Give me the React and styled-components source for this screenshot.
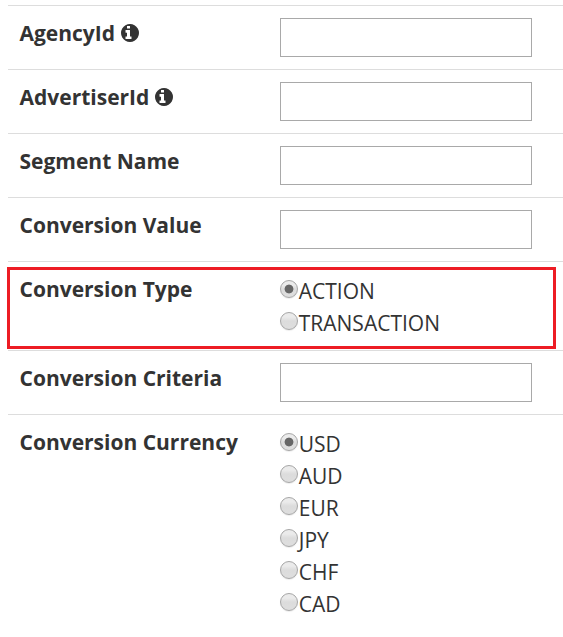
import React, { useState } from 'react';
import styled, { createGlobalStyle } from 'styled-components';

const GlobalStyle = createGlobalStyle`
  body {
    margin: 0;
    background: #fff;
    color: #333;
    font-family: 'Open Sans', 'Noto Sans', sans-serif;
    overflow: hidden;
  }
`;

const StyledForm = styled.form`
  margin: 5px 0 0 8px;
`;

const StyledRow = styled.div`
  position: relative;
  display: flex;
  align-items: flex-start;
  padding: 12px 12px 12px 11.5px;
  border-top: 1px solid #ddd;
`;

const StyledLabel = styled.div`
  display: flex;
  align-items: center;
  gap: 6px;
  width: 260.5px;
  height: 30px;
  font-size: 21px;
  font-weight: 700;
  white-space: nowrap;
`;

const StyledInfo = styled.svg`
  width: 18px;
  height: 18px;
  fill: currentColor;
`;

const StyledInput = styled.input`
  box-sizing: border-box;
  width: 252px;
  height: 39px;
  padding: 0 8px;
  border: 1px solid #a9a9a9;
  border-radius: 0;
  background: #fff;
  font: inherit;
  font-size: 21px;
  outline: none;
`;

const StyledOption = styled.label`
  display: flex;
  align-items: flex-start;
  height: 32px;
  font-size: 21px;
  line-height: 35px;
  white-space: nowrap;
`;

const StyledRadio = styled.input.attrs({ type: 'radio' })`
  appearance: none;
  box-sizing: border-box;
  width: 18px;
  height: 18px;
  margin: 6px 0.75px 0 0;
  border: 1px solid #a6a6a6;
  border-radius: 50%;
  background: linear-gradient(#ebebeb 25%, #dcdcdc 50%, #dedede);
  box-shadow: 0 1px 1px rgba(0, 0, 0, 0.08);

  &:checked {
    background: radial-gradient(circle, #666 4px, transparent 4.8px),
      linear-gradient(#ebebeb 25%, #dcdcdc 50%, #dedede);
  }
`;

const StyledHighlight = styled.div`
  position: absolute;
  top: 5px;
  left: -1px;
  box-sizing: border-box;
  width: 549px;
  height: 82px;
  border: 3px solid #ed1c24;
  z-index: 1;
  pointer-events: none;
`;

const fields = [
  { label: 'AgencyId', info: true },
  { label: 'AdvertiserId', info: true },
  { label: 'Segment Name' },
  { label: 'Conversion Value' },
  {
    label: 'Conversion Type',
    options: ['ACTION', 'TRANSACTION'],
    highlight: true
  },
  { label: 'Conversion Criteria' },
  {
    label: 'Conversion Currency',
    options: ['USD', 'AUD', 'EUR', 'JPY', 'CHF', 'CAD']
  }
];

const InfoIcon = () => (
  <StyledInfo viewBox='128 128 1536 1536'>
    <path d='M1024 1376v-160q0-14-9-23t-23-9h-96v-512q0-14-9-23t-23-9h-320q-14 0-23 9t-9 23v160q0 14 9 23t23 9h96v320h-96q-14 0-23 9t-9 23v160q0 14 9 23t23 9h448q14 0 23-9t9-23zm-128-896v-160q0-14-9-23t-23-9h-192q-14 0-23 9t-9 23v160q0 14 9 23t23 9h192q14 0 23-9t9-23zm768 416q0 209-103 385.500t-279.500 279.500-385.500 103-385.500-103-279.500-279.500-103-385.500 103-385.500 279.500-279.500 385.500-103 385.500 103 279.500 279.500 103 385.500z' />
  </StyledInfo>
);

const RadioGroup = ({ name, options }) => {
  const [value, setValue] = useState(options[0]);

  return (
    <div>
      {options.map(option => (
        <StyledOption key={option}>
          <StyledRadio
            name={name}
            checked={value === option}
            onChange={() => setValue(option)}
          />
          {option}
        </StyledOption>
      ))}
    </div>
  );
};

const App = () => (
  <>
    <GlobalStyle />
    <StyledForm>
      {fields.map(({ label, info, options, highlight }) => (
        <StyledRow key={label}>
          <StyledLabel>
            {label}
            {info && <InfoIcon />}
          </StyledLabel>
          {options ? (
            <RadioGroup name={label} options={options} />
          ) : (
            <StyledInput aria-label={label} />
          )}
          {highlight && <StyledHighlight />}
        </StyledRow>
      ))}
    </StyledForm>
  </>
);

export default App;
